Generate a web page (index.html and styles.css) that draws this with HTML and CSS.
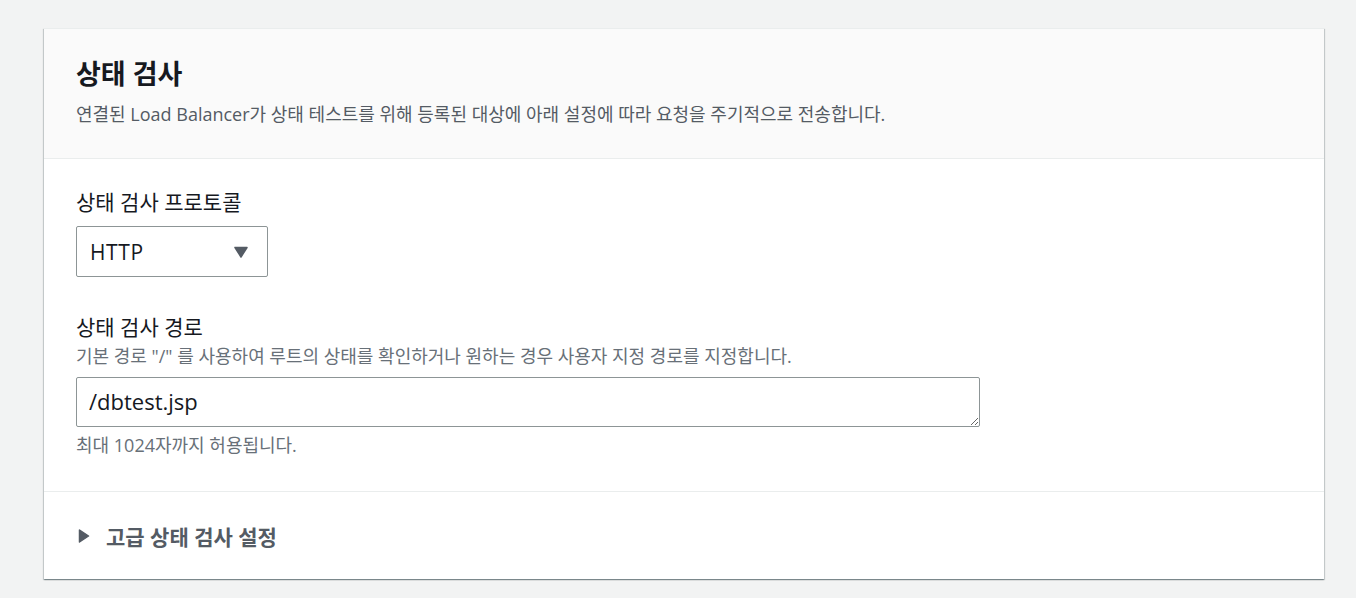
FILE: index.html
```html
<!DOCTYPE html>
<html lang="ko">
<head>
    <meta charset="UTF-8">
    <meta name="viewport" content="width=device-width, initial-scale=1.0">
    <title>상태 검사</title>
    <link rel="stylesheet" href="styles.css">
</head>
<body>
    <!-- Contenedor del panel -->
    <div class="panel">
        <!-- Encabezado -->
        <div class="panel-header">
            <h2 class="panel-title">상태 검사</h2>
            <p class="panel-desc">연결된 Load Balancer가 상태 테스트를 위해 등록된 대상에 아래 설정에 따라 요청을 주기적으로 전송합니다.</p>
        </div>

        <!-- Cuerpo -->
        <div class="panel-body">
            <div class="field">
                <label class="field-label">상태 검사 프로토콜</label>
                <div class="select">
                    <span>HTTP</span>
                    <svg width="14" height="12" viewBox="0 0 14 12"><path d="M1 1.5 L13 1.5 L7 11 Z" fill="#545b64" stroke="#545b64" stroke-width="1.5" stroke-linejoin="round"/></svg>
                </div>
            </div>

            <div class="field field-path">
                <label class="field-label">상태 검사 경로</label>
                <p class="field-hint">기본 경로 "/" 를 사용하여 루트의 상태를 확인하거나 원하는 경우 사용자 지정 경로를 지정합니다.</p>
                <textarea class="text-input" rows="1">/dbtest.jsp</textarea>
                <p class="field-hint field-constraint">최대 1024자까지 허용됩니다.</p>
            </div>
        </div>

        <!-- Sección expandible -->
        <div class="panel-footer">
            <svg width="12" height="14" viewBox="0 0 12 14"><path d="M1.5 1 L10.5 7 L1.5 13 Z" fill="#545b64" stroke="#545b64" stroke-width="1.5" stroke-linejoin="round"/></svg>
            <span class="expand-label">고급 상태 검사 설정</span>
        </div>
    </div>
</body>
</html>
```

FILE: styles.css
```css
/* Estilos generales */
body {
    margin: 0;
    padding: 28px 32px 19px 44px;
    background-color: #f2f3f3;
    font-family: "Open Sans", "Noto Sans CJK KR", sans-serif;
    color: #16191f;
}

/* Panel */
.panel {
    background-color: #fff;
    border-top: 1px solid #eaeded;
    box-shadow: 0 1px 1px 0 rgba(0, 28, 36, 0.3), 1px 1px 1px 0 rgba(0, 28, 36, 0.15), -1px 1px 1px 0 rgba(0, 28, 36, 0.15);
}

/* Encabezado */
.panel-header {
    background-color: #fafafa;
    border-bottom: 1px solid #eaeded;
    padding: 27px 32px 32px;
}

.panel-title {
    margin: 0;
    font-size: 27px;
    line-height: 36px;
    font-weight: bold;
}

.panel-desc {
    margin: 10px 0 0;
    font-size: 18px;
    line-height: 24px;
    color: #545b64;
}

/* Cuerpo */
.panel-body {
    padding: 29px 32px 34px;
    border-bottom: 1px solid #eaeded;
}

.field {
    display: flex;
    flex-direction: column;
    align-items: flex-start;
}

.field-path {
    margin-top: 36px;
}

.field-label {
    font-size: 21px;
    line-height: 28px;
    margin-bottom: 10px;
}

.field-path .field-label {
    margin-bottom: 3px;
}

.field-hint {
    margin: 0;
    font-size: 18px;
    line-height: 24px;
    color: #687078;
}

.field-constraint {
    margin-top: 6px;
}

/* Selector */
.select {
    width: 192px;
    height: 51px;
    box-sizing: border-box;
    border: 1px solid #8d9596;
    border-radius: 2px;
    display: flex;
    align-items: center;
    justify-content: space-between;
    padding: 0 19px 0 13px;
    font-size: 21px;
    letter-spacing: 0.6px;
    background-color: #fff;
}

/* Campo de texto */
.text-input {
    width: 904px;
    height: 50px;
    box-sizing: border-box;
    margin-top: 9px;
    border: 1px solid #8d9596;
    border-radius: 2px;
    padding: 9px 12px;
    font-family: "Open Sans", "Noto Sans CJK KR", sans-serif;
    font-size: 22px;
    line-height: 28px;
    color: #16191f;
    resize: vertical;
}

/* Sección expandible */
.panel-footer {
    height: 87px;
    padding: 0 34px;
    display: flex;
    align-items: center;
    gap: 16px;
}

.expand-label {
    font-size: 21px;
    font-weight: bold;
    color: #545b64;
}
```
